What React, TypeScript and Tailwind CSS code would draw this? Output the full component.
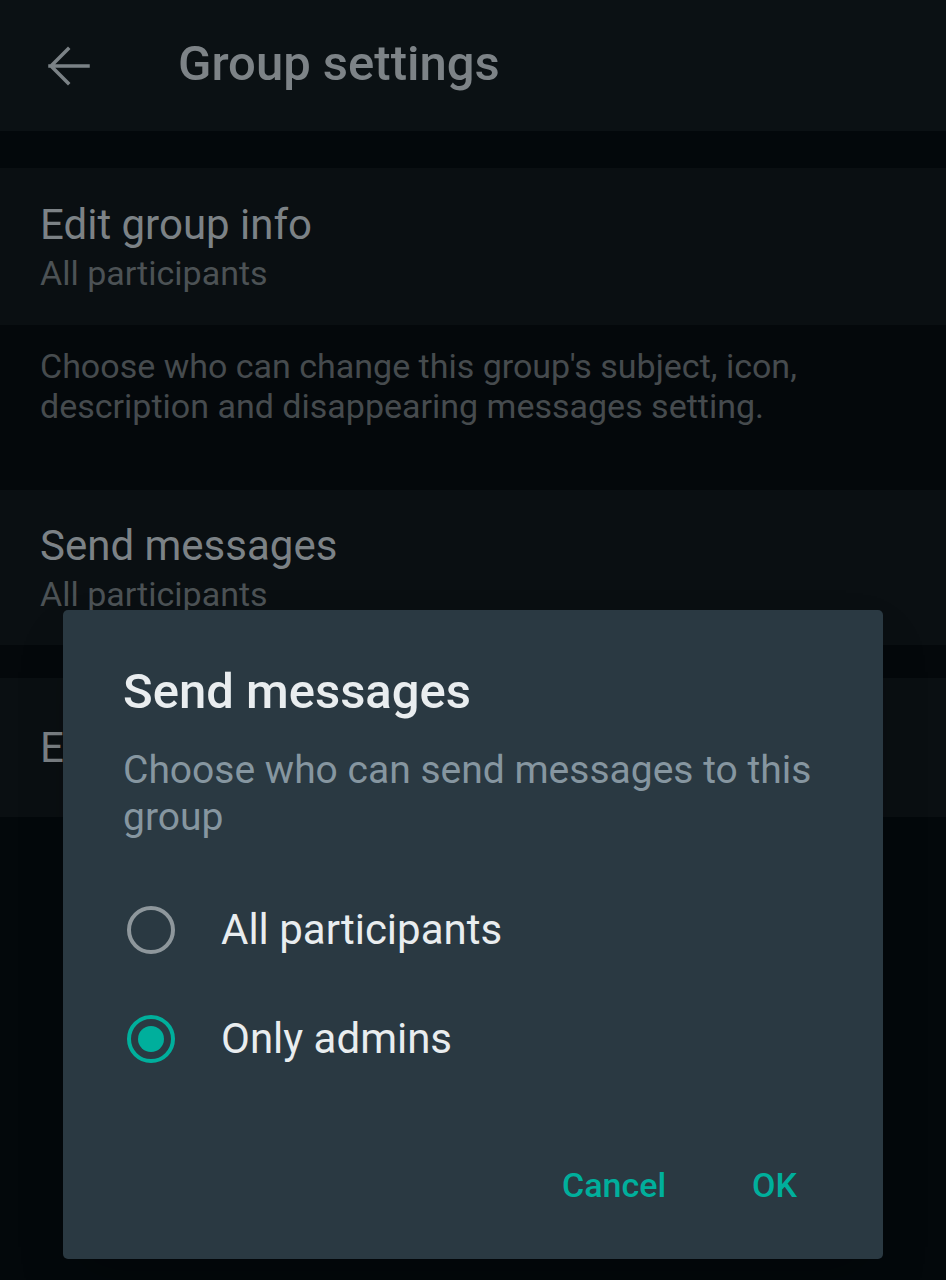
import { useState } from "react";

const FONT = { fontFamily: "Roboto, 'Noto Sans', 'Liberation Sans', sans-serif" };

const OPTIONS = [
  { id: "all", label: "All participants" },
  { id: "admins", label: "Only admins" },
];

function BackArrow() {
  return (
    <svg width="44" height="40" viewBox="0 0 44 40" fill="none" stroke="#7b8286" strokeWidth="3.5" strokeLinecap="square">
      <path d="M3 20h38M21 3L4 20l17 17" />
    </svg>
  );
}

function Radio({ checked }: { checked: boolean }) {
  return (
    <span
      className={`w-[48px] h-[48px] rounded-full border-[4px] flex items-center justify-center shrink-0 ${
        checked ? "border-[#00af9c]" : "border-[#8e979c]"
      }`}
    >
      {checked && <span className="w-[26px] h-[26px] rounded-full bg-[#00af9c]" />}
    </span>
  );
}

function SettingRow({ title, value, h }: { title: string; value?: string; h: string }) {
  return (
    <div className={`${h} bg-[#0a0f12] px-[40px] flex flex-col justify-center`}>
      <p className="text-[42px] leading-[50px] text-[#7c8286]">{title}</p>
      {value && <p className="text-[34px] leading-[42px] text-[#4c5255] mt-[2px]">{value}</p>}
    </div>
  );
}

export default function App() {
  const [choice, setChoice] = useState("admins");

  return (
    <div className="relative w-[946px] h-[1280px] bg-[#03080b] overflow-hidden" style={FONT}>
      {/* Header */}
      <header className="h-[131px] bg-[#0b1114] flex items-center">
        <div className="pl-[47px] pr-[87px] flex items-center">
          <BackArrow />
        </div>
        <h1 className="text-[49px] font-medium text-[#7d8387] mt-[-4px]">Group settings</h1>
      </header>

      <div className="h-[37px] bg-[#03080b]" />

      <SettingRow title="Edit group info" value="All participants" h="h-[157px]" />

      <div className="h-[165px] bg-[#04080b] px-[40px] pt-[21px]">
        <p className="text-[34px] leading-[40px] text-[#464b4e]">
          Choose who can change this group's subject, icon, description and disappearing messages setting.
        </p>
      </div>

      <SettingRow title="Send messages" value="All participants" h="h-[155px]" />

      <div className="h-[33px] bg-[#04080b]" />

      <SettingRow title="Edit group admins" h="h-[139px]" />

      {/* Dialog */}
      <div className="absolute left-[63px] top-[610px] w-[820px] h-[649px] rounded-[5px] bg-[#2a3942] shadow-2xl flex flex-col">
        <div className="px-[60px] pt-[54px]">
          <h2 className="text-[49px] leading-[56px] font-medium text-[#e9edef]">Send messages</h2>
          <p className="mt-[27px] text-[39px] leading-[47px] text-[#8696a0]">
            Choose who can send messages to this group
          </p>
        </div>

        <div className="mt-[34px] flex flex-col">
          {OPTIONS.map((opt) => (
            <button
              key={opt.id}
              onClick={() => setChoice(opt.id)}
              className="h-[109px] pl-[64px] flex items-center gap-[46px] text-left"
            >
              <Radio checked={choice === opt.id} />
              <span className="text-[42px] text-[#e9edef]">{opt.label}</span>
            </button>
          ))}
        </div>

        <div className="mt-auto mb-[54px] pr-[86px] flex justify-end items-center gap-[86px]">
          <button className="text-[34px] leading-[40px] font-medium text-[#00af9c]">Cancel</button>
          <button className="text-[34px] leading-[40px] font-medium text-[#00af9c]">OK</button>
        </div>
      </div>
    </div>
  );
}
